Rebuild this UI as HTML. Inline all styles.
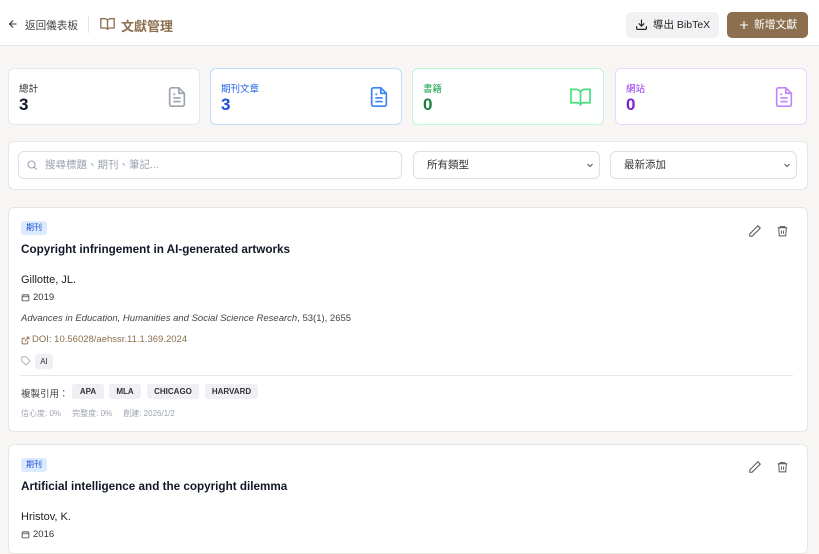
<!DOCTYPE html>
<html><head><meta charset="utf-8"><style>
*{box-sizing:border-box;margin:0;padding:0}
body{width:819px;height:541px;overflow:hidden;background:#f7f6f4;font-family:"Liberation Sans","Noto Sans CJK TC",sans-serif;color:#111827;position:relative}
.a{position:absolute}
svg.a{display:block}
.hdr{left:0;top:0;width:819px;height:46px;background:#fff;border-bottom:1px solid #e9e7e4}
.stat{top:68px;width:192px;height:57px;background:#fff;border:1px solid #e5e7eb;border-radius:6px}
.stat .l{position:absolute;left:10px;top:12px;font-size:9.5px}
.stat .n{position:absolute;left:10px;top:26px;font-size:17px;font-weight:bold}
.stat svg{position:absolute;right:11px;top:16px}
.panel{background:#fff;border:1px solid #e8e6e3;border-radius:6px}
.inp{background:#fff;border:1px solid #dcdfe4;border-radius:6px;height:28px;font-size:10.5px;color:#333}
.tag{font-size:8px;font-weight:bold;background:#eef0f3;color:#333;border-radius:3px;height:15px;line-height:15px;text-align:center}
.chev{position:absolute;right:6px;top:11px}
</style></head><body>
<div class="a hdr">
 <svg class="a" style="left:7px;top:18px" width="12" height="12" viewBox="0 0 24 24" fill="none" stroke="#333" stroke-width="2.2"><path d="M19 12H5M12 19l-7-7 7-7"/></svg>
 <div class="a" style="left:25px;top:18px;font-size:10.6px;color:#444">返回儀表板</div>
 <div class="a" style="left:88px;top:16px;width:1px;height:17px;background:#e5e5e5"></div>
 <svg class="a" style="left:99px;top:16px" width="17" height="16" viewBox="0 0 24 24" fill="none" stroke="#8b6f4e" stroke-width="2"><path d="M2 4h6a4 4 0 0 1 4 4v13a3 3 0 0 0-3-3H2zM22 4h-6a4 4 0 0 0-4 4v13a3 3 0 0 1 3-3h7z"/></svg>
 <div class="a" style="left:121px;top:16px;font-size:13px;font-weight:bold;color:#8b6f4e">文獻管理</div>
 <div class="a" style="left:626px;top:12px;width:93px;height:26px;background:#f1f2f4;border-radius:5px;font-size:10.5px;color:#222;line-height:26px;padding-left:27px">導出 BibTeX</div>
 <svg class="a" style="left:635px;top:18px" width="13" height="13" viewBox="0 0 24 24" fill="none" stroke="#222" stroke-width="2.2"><path d="M21 15v4a2 2 0 0 1-2 2H5a2 2 0 0 1-2-2v-4M7 10l5 5 5-5M12 15V3"/></svg>
 <div class="a" style="left:727px;top:12px;width:81px;height:26px;background:#8b6f4e;border-radius:5px;font-size:10.8px;color:#fff;line-height:26px;padding-left:27px">新增文獻</div>
 <svg class="a" style="left:738px;top:19px" width="12" height="12" viewBox="0 0 24 24" fill="none" stroke="#fff" stroke-width="2.2"><path d="M12 4v16M4 12h16"/></svg>
</div>

<div class="a stat" style="left:8px"><div class="l" style="color:#333">總計</div><div class="n">3</div>
 <svg width="22" height="24" viewBox="0 0 24 24" fill="none" stroke="#9ca3af" stroke-width="1.8"><path d="M14 2H6a2 2 0 0 0-2 2v16a2 2 0 0 0 2 2h12a2 2 0 0 0 2-2V8z"/><path d="M14 2v6h6M8 13h8M8 17h8M8 9h2"/></svg></div>
<div class="a stat" style="left:210px;border-color:#bfdbfe"><div class="l" style="color:#2563eb">期刊文章</div><div class="n" style="color:#1d4ed8">3</div>
 <svg width="22" height="24" viewBox="0 0 24 24" fill="none" stroke="#3b82f6" stroke-width="1.8"><path d="M14 2H6a2 2 0 0 0-2 2v16a2 2 0 0 0 2 2h12a2 2 0 0 0 2-2V8z"/><path d="M14 2v6h6M8 13h8M8 17h8M8 9h2"/></svg></div>
<div class="a stat" style="left:412px;border-color:#bbf7d0"><div class="l" style="color:#16a34a">書籍</div><div class="n" style="color:#15803d">0</div>
 <svg width="23" height="24" viewBox="0 0 24 24" fill="none" stroke="#4ade80" stroke-width="1.8"><path d="M2 4h6a4 4 0 0 1 4 4v13a3 3 0 0 0-3-3H2zM22 4h-6a4 4 0 0 0-4 4v13a3 3 0 0 1 3-3h7z"/></svg></div>
<div class="a stat" style="left:615px;border-color:#e9d5ff"><div class="l" style="color:#9333ea">網站</div><div class="n" style="color:#7e22ce">0</div>
 <svg width="22" height="24" viewBox="0 0 24 24" fill="none" stroke="#c084fc" stroke-width="1.8"><path d="M14 2H6a2 2 0 0 0-2 2v16a2 2 0 0 0 2 2h12a2 2 0 0 0 2-2V8z"/><path d="M14 2v6h6M8 13h8M8 17h8M8 9h2"/></svg></div>

<div class="a panel" style="left:8px;top:141px;width:800px;height:49px"></div>
<div class="a inp" style="left:18px;top:151px;width:384px;color:#9ca3af;line-height:26px;padding-left:26px">搜尋標題、期刊、筆記...</div>
<svg class="a" style="left:26px;top:159px" width="12" height="12" viewBox="0 0 24 24" fill="none" stroke="#9ca3af" stroke-width="2.2"><circle cx="11" cy="11" r="7"/><path d="M21 21l-4.5-4.5"/></svg>
<div class="a inp" style="left:413px;top:151px;width:187px;line-height:26px;padding-left:13px">所有類型<svg class="chev" width="6" height="5" viewBox="0 0 12 8" fill="none" stroke="#555" stroke-width="2"><path d="M1 1l5 5 5-5"/></svg></div>
<div class="a inp" style="left:610px;top:151px;width:187px;line-height:26px;padding-left:13px">最新添加<svg class="chev" width="6" height="5" viewBox="0 0 12 8" fill="none" stroke="#555" stroke-width="2"><path d="M1 1l5 5 5-5"/></svg></div>

<div class="a panel" style="left:8px;top:207px;width:800px;height:225px"></div>
<div class="a" style="left:21px;top:221px;width:26px;height:14px;background:#dbeafe;color:#1d4ed8;border-radius:3px;font-size:8px;line-height:14px;text-align:center">期刊</div>
<div class="a" style="left:21px;top:243px;font-size:11.7px;font-weight:bold">Copyright infringement in AI-generated artworks</div>
<svg class="a" style="left:748px;top:224px" width="14" height="14" viewBox="0 0 24 24" fill="none" stroke="#555" stroke-width="1.8"><path d="M17 3l4 4L7 21H3v-4z"/></svg>
<svg class="a" style="left:776px;top:224px" width="13" height="14" viewBox="0 0 24 24" fill="none" stroke="#555" stroke-width="1.8"><path d="M3 6h18M8 6V4h8v2M5 6l1 15h12l1-15M10 11v6M14 11v6"/></svg>
<div class="a" style="left:21px;top:274px;font-size:11px;color:#222">Gillotte, JL.</div>
<svg class="a" style="left:21px;top:293px" width="9" height="9" viewBox="0 0 24 24" fill="none" stroke="#444" stroke-width="2.2"><rect x="3" y="5" width="18" height="16" rx="2"/><path d="M3 10h18M8 3v4M16 3v4"/></svg>
<div class="a" style="left:33px;top:292px;font-size:9.5px;color:#333">2019</div>
<div class="a" style="left:21px;top:313px;font-size:9.5px;color:#444"><i>Advances in Education, Humanities and Social Science Research</i>, 53(1), 2655</div>
<svg class="a" style="left:21px;top:336px" width="9" height="9" viewBox="0 0 24 24" fill="none" stroke="#8b6f4e" stroke-width="2.4"><path d="M18 13v6a2 2 0 0 1-2 2H5a2 2 0 0 1-2-2V8a2 2 0 0 1 2-2h6M15 3h6v6M10 14L21 3"/></svg>
<div class="a" style="left:32px;top:334px;font-size:9.5px;color:#8b6f4e">DOI: 10.56028/aehssr.11.1.369.2024</div>
<svg class="a" style="left:21px;top:356px" width="10" height="10" viewBox="0 0 24 24" fill="none" stroke="#9ca3af" stroke-width="2"><path d="M20.6 13.4l-7.2 7.2a2 2 0 0 1-2.8 0L2 12V2h10l8.6 8.6a2 2 0 0 1 0 2.8z"/></svg>
<div class="a tag" style="left:35px;top:354px;width:18px;font-weight:normal">AI</div>
<div class="a" style="left:20px;top:375px;width:773px;height:1px;background:#e5e7eb"></div>
<div class="a" style="left:21px;top:386px;font-size:9.5px;color:#444">複製引用：</div>
<div class="a tag" style="left:72px;top:384px;width:32px">APA</div>
<div class="a tag" style="left:109px;top:384px;width:32px">MLA</div>
<div class="a tag" style="left:147px;top:384px;width:52px">CHICAGO</div>
<div class="a tag" style="left:205px;top:384px;width:53px">HARVARD</div>
<div class="a" style="left:21px;top:408px;font-size:8px;color:#9ca3af">信心度: 0%&nbsp;&nbsp;&nbsp;&nbsp;&nbsp;完整度: 0%&nbsp;&nbsp;&nbsp;&nbsp;&nbsp;創建: 2026/1/2</div>

<div class="a panel" style="left:8px;top:444px;width:800px;height:110px"></div>
<div class="a" style="left:21px;top:458px;width:26px;height:14px;background:#dbeafe;color:#1d4ed8;border-radius:3px;font-size:8px;line-height:14px;text-align:center">期刊</div>
<div class="a" style="left:21px;top:480px;font-size:11.7px;font-weight:bold">Artificial intelligence and the copyright dilemma</div>
<svg class="a" style="left:748px;top:460px" width="14" height="14" viewBox="0 0 24 24" fill="none" stroke="#555" stroke-width="1.8"><path d="M17 3l4 4L7 21H3v-4z"/></svg>
<svg class="a" style="left:776px;top:460px" width="13" height="14" viewBox="0 0 24 24" fill="none" stroke="#555" stroke-width="1.8"><path d="M3 6h18M8 6V4h8v2M5 6l1 15h12l1-15M10 11v6M14 11v6"/></svg>
<div class="a" style="left:21px;top:511px;font-size:11px;color:#222">Hristov, K.</div>
<svg class="a" style="left:21px;top:530px" width="9" height="9" viewBox="0 0 24 24" fill="none" stroke="#444" stroke-width="2.2"><rect x="3" y="5" width="18" height="16" rx="2"/><path d="M3 10h18M8 3v4M16 3v4"/></svg>
<div class="a" style="left:33px;top:529px;font-size:9.5px;color:#333">2016</div>
</body></html>
